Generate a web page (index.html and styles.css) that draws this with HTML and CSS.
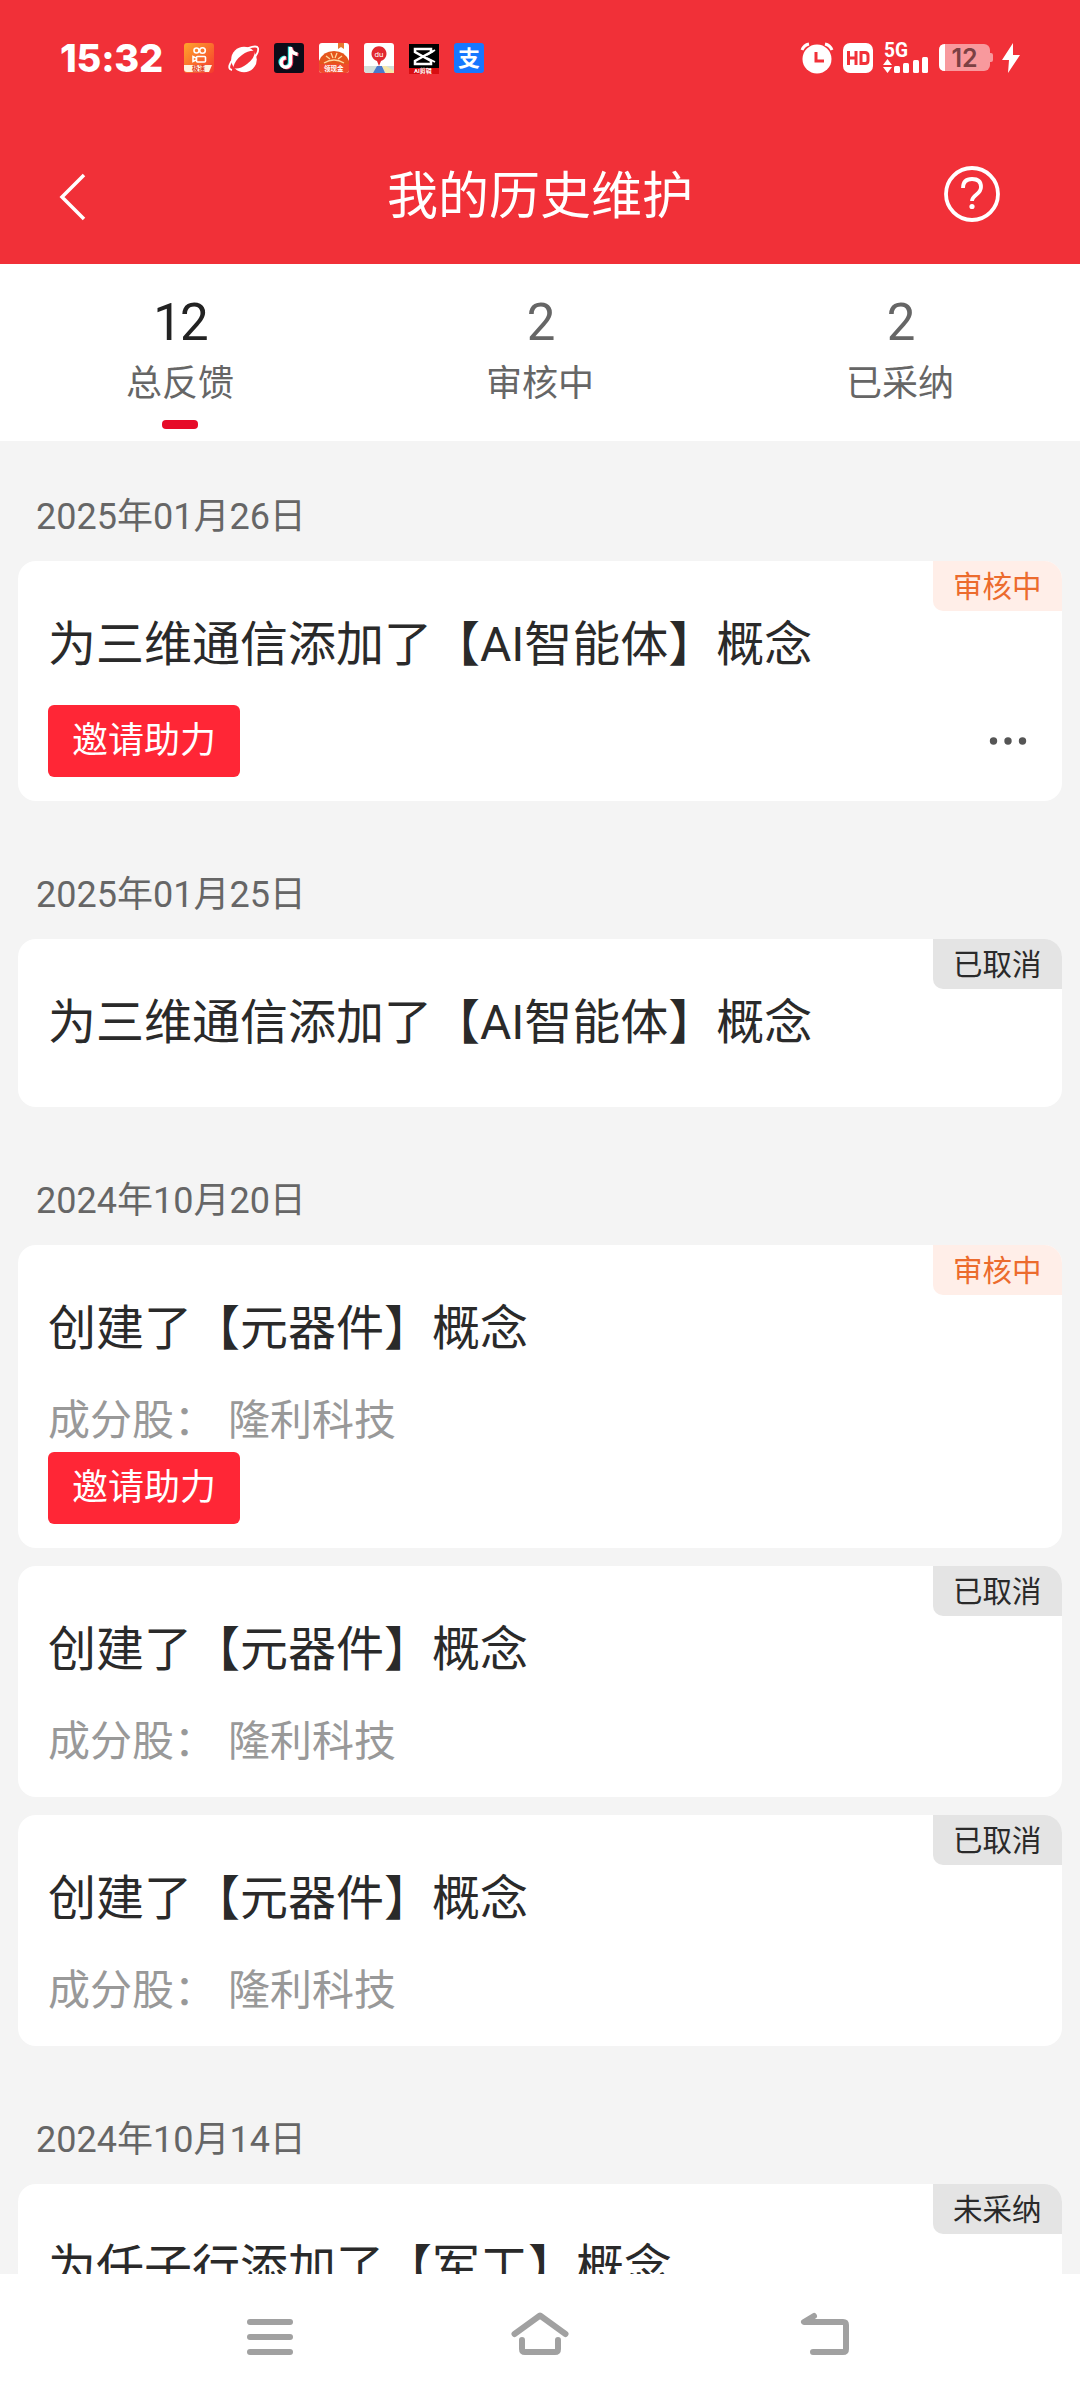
FILE: index.html
```html
<!DOCTYPE html>
<html lang="zh-CN">
<head>
    <meta charset="UTF-8">
    <meta name="viewport" content="width=device-width, initial-scale=1.0">
    <title>我的历史维护</title>
    <link rel="stylesheet" href="styles.css">
</head>
<body>
    <header class="header">
        <div class="status-bar">
            <div class="status-left">
                <span class="clock">15:32</span>
                <svg class="app" viewBox="0 0 30 30">
                    <defs>
                        <linearGradient id="ks" x1="0" y1="0" x2="1" y2="1">
                            <stop offset="0" stop-color="#ffa52b"/>
                            <stop offset="1" stop-color="#f5392e"/>
                        </linearGradient>
                    </defs>
                    <rect width="30" height="30" rx="3" fill="url(#ks)"/>
                    <g fill="none" stroke="#fff" stroke-width="1.6">
                        <circle cx="12.500" cy="7.500" r="2.500"/>
                        <circle cx="18.500" cy="7.500" r="2.800"/>
                        <rect x="12.500" y="13.500" width="9" height="5.500" rx="1"/>
                        <path d="M12 15l-3-1.500v5l3-1.500"/>
                    </g>
                    <path d="M0 22h28l-3 7H3q-3 0-3-3z" fill="#fff3df"/>
                    <text x="8" y="28" font-size="6.500" font-weight="bold" fill="#e33b20">极速</text>
                </svg>
                <svg class="app" viewBox="0 0 30 30">
                    <circle cx="15" cy="16.500" r="12.800" fill="#fff"/>
                    <path d="M3 27Q-2 26 2 19 8 9 19 5q9-3 10 0 1 4-4 10" fill="none" stroke="#fff" stroke-width="1.800"/>
                    <path d="M4 25Q6 17 13 12T26 8Q26 15 18 21T4 25z" fill="#f13038"/>
                </svg>
                <svg class="app" viewBox="0 0 30 30">
                    <rect width="30" height="30" rx="3" fill="#0d0b18"/>
                    <g fill="none" stroke-width="3.400">
                        <path d="M16.500 4v15.500a4.700 4.700 0 1 1-4.700-4.700M16.500 5q1 5.500 7 6.300" stroke="#25e5e0" transform="translate(-1 -.5)"/>
                        <path d="M16.500 4v15.500a4.700 4.700 0 1 1-4.700-4.700M16.500 5q1 5.500 7 6.300" stroke="#f9385a" transform="translate(1 .5)"/>
                        <path d="M16.500 4v15.500a4.700 4.700 0 1 1-4.700-4.700M16.500 5q1 5.500 7 6.300" stroke="#fff"/>
                    </g>
                </svg>
                <svg class="app" viewBox="0 0 30 30">
                    <rect width="30" height="30" rx="3" fill="#fff"/>
                    <path d="M19 0h6v6l-3-2-3 2z" fill="#e8772e"/>
                    <path d="M0 18Q4 8 15 8t15 10v4H0z" fill="#e5551c"/>
                    <path d="M7 13l4 3M12 10l2 5M16 15l2-5M19 16l4-3M5 20q10-6 20 0" stroke="#ffd9a0" stroke-width="1.300" fill="none"/>
                    <path d="M0 21h30v6q0 3-3 3H3q-3 0-3-3z" fill="#f04a2c"/>
                    <text x="5" y="28" font-size="6.500" font-weight="bold" fill="#fff">领现金</text>
                </svg>
                <svg class="app" viewBox="0 0 30 30">
                    <rect width="30" height="30" rx="3" fill="#fff"/>
                    <path d="M0 23h30v4q0 3-3 3H3q-3 0-3-3z" fill="#d3dfda"/>
                    <path d="M13 23h5l3 7H9z" fill="#4a79cb"/>
                    <path d="M18 23h4l8 5v2h-8z" fill="#f5e7a9"/>
                    <path d="M15 23l-2-5a7.500 7.500 0 1 1 4 0z" fill="#e2282f"/>
                    <text x="15" y="14" font-size="8" text-anchor="middle" fill="#fff">du</text>
                </svg>
                <svg class="app" viewBox="0 0 30 30">
                    <rect width="30" height="30" y="1" fill="#000"/>
                    <path d="M22 9V6H6v3l16 9v3H6v-3L24 8" fill="none" stroke="#fff" stroke-width="2.500"/>
                    <path d="M18 12l8-5M18 15l8 4" stroke="#fff" stroke-width="1.800"/>
                    <rect y="25" width="30" height="6" fill="#d80e12"/>
                    <text x="5" y="30" font-size="6" font-weight="bold" fill="#fff">AI剪辑</text>
                </svg>
                <svg class="app" viewBox="0 0 30 30">
                    <rect width="30" height="30" rx="3" fill="#1677ff"/>
                    <text x="15" y="23" font-size="22" font-weight="bold" text-anchor="middle" fill="#fff">支</text>
                </svg>
            </div>
            <div class="status-right">
                <svg width="34" height="32" viewBox="0 0 34 32">
                    <circle cx="17" cy="17" r="14.500" fill="#fff"/>
                    <path d="M2 8q2-5 7-6M25 2q5 1 7 6" fill="none" stroke="#fff" stroke-width="3"/>
                    <path d="M16 10v9h8" fill="none" stroke="#f13038" stroke-width="3"/>
                </svg>
                <svg class="hd" width="30" height="30" viewBox="0 0 30 30">
                    <rect width="30" height="30" rx="7" fill="#fff"/>
                    <path d="M5.500 8v14M13 8v14M5.500 15H13M18 9.500h4q3 0 3 3v5q0 3-3 3h-4z" fill="none" stroke="#f13038" stroke-width="3"/>
                </svg>
                <svg class="signal" width="46" height="32" viewBox="0 0 46 32">
                    <text x="1" y="15" font-size="20" font-weight="bold" fill="#fff" textLength="24" lengthAdjust="spacingAndGlyphs">5G</text>
                    <path d="M0 23l4.500-6 4.500 6zM0 25h9l-4.500 6z" fill="#fff"/>
                    <rect x="11" y="24" width="6" height="7" rx="1.500" fill="#fff"/>
                    <rect x="20" y="21" width="6" height="10" rx="1.500" fill="#fff"/>
                    <rect x="30" y="18" width="6" height="13" rx="1.500" fill="#fff"/>
                    <rect x="39" y="15" width="6" height="16" rx="1.500" fill="#fff"/>
                </svg>
                <svg class="battery" width="54" height="28" viewBox="0 0 54 28">
                    <rect width="51" height="27" rx="6" fill="#f8999d"/>
                    <path d="M51 9h1q2 0 2 2v5q0 2-2 2h-1z" fill="#f8999d"/>
                    <path d="M6 0v27Q0 27 0 21V6Q0 0 6 0z" fill="#fff"/>
                    <text x="25.500" y="23" font-size="25" font-weight="600" text-anchor="middle" fill="#7c4043">12</text>
                </svg>
                <svg class="bolt" width="18" height="30" viewBox="0 0 18 30">
                    <path d="M11 0L0 17h7L6 30 18 12h-7z" fill="#fff"/>
                </svg>
            </div>
        </div>
        <div class="title-bar">
            <svg width="30" height="50" viewBox="0 0 30 50">
                <path d="M26 3L4 25l22 22" fill="none" stroke="#fff" stroke-width="3.500"/>
            </svg>
            <h1>我的历史维护</h1>
            <svg class="help" width="58" height="58" viewBox="0 0 58 58">
                <circle cx="29" cy="29" r="26" fill="none" stroke="#fff" stroke-width="3.800"/>
                <path d="M20 23q0-9 9-9t9 8q0 4-4.500 7.500T29 36" fill="none" stroke="#fff" stroke-width="3.800"/>
                <circle cx="29" cy="41.500" r="2.600" fill="#fff"/>
            </svg>
        </div>
    </header>

    <nav class="tabs">
        <div class="tab active">
            <span class="num">12</span>
            <span class="label">总反馈</span>
        </div>
        <div class="tab">
            <span class="num">2</span>
            <span class="label">审核中</span>
        </div>
        <div class="tab">
            <span class="num">2</span>
            <span class="label">已采纳</span>
        </div>
    </nav>

    <main class="list">
        <div class="date">2025年01月26日</div>
        <div class="card">
            <span class="badge pending">审核中</span>
            <h2>为三维通信添加了【AI智能体】概念</h2>
            <div class="actions">
                <button class="invite">邀请助力</button>
                <svg class="more" width="38" height="10" viewBox="0 0 38 10" fill="#555">
                    <circle cx="4.500" cy="5" r="3.700"/>
                    <circle cx="19" cy="5" r="3.700"/>
                    <circle cx="33.500" cy="5" r="3.700"/>
                </svg>
            </div>
        </div>

        <div class="date">2025年01月25日</div>
        <div class="card">
            <span class="badge">已取消</span>
            <h2>为三维通信添加了【AI智能体】概念</h2>
        </div>

        <div class="date">2024年10月20日</div>
        <div class="card">
            <span class="badge pending">审核中</span>
            <h2>创建了【元器件】概念</h2>
            <p class="stocks"><span>成分股：</span><span>隆利科技</span></p>
            <div class="actions">
                <button class="invite">邀请助力</button>
            </div>
        </div>
        <div class="card">
            <span class="badge">已取消</span>
            <h2>创建了【元器件】概念</h2>
            <p class="stocks"><span>成分股：</span><span>隆利科技</span></p>
        </div>
        <div class="card">
            <span class="badge">已取消</span>
            <h2>创建了【元器件】概念</h2>
            <p class="stocks"><span>成分股：</span><span>隆利科技</span></p>
        </div>

        <div class="date">2024年10月14日</div>
        <div class="card">
            <span class="badge">未采纳</span>
            <h2>为任子行添加了【军工】概念</h2>
        </div>
    </main>

    <footer class="nav-bar">
        <svg width="60" height="50" viewBox="0 0 60 50" fill="#a1a1a1">
            <rect x="7" y="9" width="46" height="6" rx="3"/>
            <rect x="7" y="24" width="46" height="6" rx="3"/>
            <rect x="7" y="39" width="46" height="6" rx="3"/>
        </svg>
        <svg width="60" height="50" viewBox="0 0 60 50" fill="none" stroke="#a1a1a1" stroke-width="6" stroke-linecap="round" stroke-linejoin="round">
            <path d="M4.500 24L30 5.500 55.500 24"/>
            <path d="M12 30v9q0 3 3 3h30q3 0 3-3v-9"/>
        </svg>
        <svg class="back" width="60" height="50" viewBox="0 0 60 50" fill="none" stroke="#a1a1a1" stroke-width="6" stroke-linecap="round" stroke-linejoin="round">
            <path d="M19 6L9 12h39q3 0 3 3v24q0 3-3 3H18"/>
        </svg>
    </footer>
</body>
</html>
```
FILE: styles.css
```css
* {
    box-sizing: border-box;
    margin: 0;
    padding: 0;
}
body {
    font-family: Roboto, "Noto Sans CJK SC", sans-serif;
    background-color: #f4f4f4;
    width: 1080px;
    height: 2400px;
    display: flex;
    flex-direction: column;
    overflow: hidden;
}
svg {
    display: block;
    flex-shrink: 0;
    overflow: visible;
}

/* header */
.header {
    background-color: #f13038;
    color: #fff;
    height: 264px;
    flex-shrink: 0;
}
.status-bar {
    height: 116px;
    padding: 0 60px;
    display: flex;
    justify-content: space-between;
    align-items: center;
}
.status-left,
.status-right {
    display: flex;
    align-items: center;
}
.status-left {
    gap: 15px;
}
.clock {
    width: 109px;
    font-family: Inter, sans-serif;
    font-size: 38px;
    font-weight: 800;
    letter-spacing: -0.2px;
    white-space: nowrap;
}
.app {
    width: 30px;
    height: 30px;
}
.hd {
    margin-left: 9px;
}
.signal {
    margin-left: 10px;
}
.battery {
    margin-left: 10px;
    font-family: Inter, sans-serif;
}
.bolt {
    margin-left: 9px;
}
.title-bar {
    height: 148px;
    padding: 14px 79px 0 58px;
    display: flex;
    align-items: center;
}
.title-bar h1 {
    flex: 1;
    padding-left: 49px;
    font-size: 51px;
    line-height: 80px;
    font-weight: 400;
    text-align: center;
}
.help {
    margin-bottom: 6px;
}

/* tabs */
.tabs {
    display: flex;
    height: 177px;
    flex-shrink: 0;
    background-color: #fff;
}
.tab {
    flex: 1;
    display: flex;
    flex-direction: column;
    align-items: center;
    color: #666;
}
.num {
    padding-top: 29px;
    font-size: 51px;
    line-height: 60px;
    letter-spacing: -2px;
}
.label {
    padding-top: 7px;
    font-size: 36px;
    line-height: 48px;
}
.active .num {
    color: #222;
}
.active::after {
    content: "";
    width: 36px;
    height: 9px;
    margin-top: 12px;
    border-radius: 4px;
    background-color: #e60b28;
}

/* list */
.list {
    flex: 1;
    min-height: 0;
    overflow: hidden;
    padding: 0 18px;
}
.date {
    height: 120px;
    padding: 46px 18px 0;
    font-size: 36px;
    line-height: 60px;
    color: #666;
}
.card {
    position: relative;
    overflow: hidden;
    margin-bottom: 18px;
    padding: 49px 30px 24px;
    border-radius: 18px;
    background-color: #fff;
}
.card h2 {
    height: 95px;
    font-size: 48px;
    line-height: 70px;
    font-weight: 400;
    color: #2a2a2a;
}
.badge {
    position: absolute;
    top: 0;
    right: 0;
    width: 129px;
    height: 50px;
    padding-left: 20px;
    border-radius: 0 0 0 10px;
    font-size: 29.5px;
    line-height: 52px;
    color: #2a2a2a;
    background-color: #e4e4e4;
}
.badge.pending {
    color: #ec6b2d;
    background-color: #ffeee8;
}
.stocks {
    display: flex;
    gap: 12px;
    height: 63px;
    font-size: 42px;
    line-height: 64px;
    color: #999;
}
.actions {
    display: flex;
    justify-content: space-between;
    align-items: center;
}
.more {
    margin-right: 5px;
}
.invite {
    width: 192px;
    height: 72px;
    border: none;
    border-radius: 6px;
    font-family: inherit;
    font-size: 36px;
    line-height: 72px;
    color: #fff;
    background-color: #ff2636;
}

/* bottom navigation */
.nav-bar {
    display: flex;
    gap: 210px;
    flex-shrink: 0;
    height: 126px;
    padding: 36px 0 0 240px;
    background-color: #fff;
}
.back {
    margin-left: 15px;
}
```
